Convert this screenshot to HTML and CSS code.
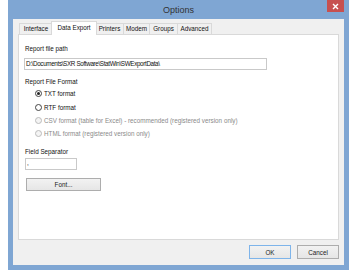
FILE: index.html
```html
<!DOCTYPE html>
<html>
<head>
<meta charset="utf-8">
<title>Options</title>
<link rel="stylesheet" href="styles.css">
</head>
<body>
<div class="window">
  <div class="titlebar">
    <span class="title">Options</span>
    <div class="close"><svg width="7" height="7" viewBox="0 0 7 7"><path d="M1 1L6 6M6 1L1 6" stroke="#fff" stroke-width="1.4"/></svg></div>
  </div>
  <div class="client">
    <div class="tabs">
      <div class="tab t-interface">Interface</div>
      <div class="tab active t-export">Data Export</div>
      <div class="tab t-printers">Printers</div>
      <div class="tab t-modem">Modem</div>
      <div class="tab t-groups">Groups</div>
      <div class="tab t-advanced">Advanced</div>
    </div>
    <div class="panel">
      <div class="label l-path">Report file path</div>
      <div class="textbox path">D:\Documents\SXR Software\StatWin\SWExportData\</div>
      <div class="label l-format">Report File Format</div>
      <div class="radios">
        <div class="radio-row"><span class="radio checked"></span><span>TXT format</span></div>
        <div class="radio-row"><span class="radio"></span><span>RTF format</span></div>
        <div class="radio-row disabled"><span class="radio"></span><span>CSV format (table for Excel) - recommended (registered version only)</span></div>
        <div class="radio-row disabled"><span class="radio"></span><span>HTML format (registered version only)</span></div>
      </div>
      <div class="label l-sep">Field Separator</div>
      <div class="textbox sep">,</div>
      <div class="btn font-btn">Font...</div>
    </div>
    <div class="footer">
      <div class="btn default">OK</div>
      <div class="btn">Cancel</div>
    </div>
  </div>
</div>
</body>
</html>
```
FILE: styles.css
```css
html, body {
  margin: 0;
  padding: 0;
  background: #ffffff;
}
body {
  font-family: "Liberation Sans", Arial, sans-serif;
  font-size: 6.3px;
  color: #111111;
}
.window {
  margin-left: 8px;
  width: 341px;
  height: 270px;
  box-sizing: border-box;
  padding: 0 5px 5px;
  background: #7fa6d3;
  display: flex;
  flex-direction: column;
}
.titlebar {
  height: 19px;
  position: relative;
  display: flex;
  align-items: center;
  justify-content: center;
}
.title {
  font-size: 9px;
  color: #333333;
  margin-top: 1px;
}
.close {
  position: absolute;
  right: 0;
  top: 0;
  width: 17px;
  height: 12px;
  background: #c75050;
  display: flex;
  align-items: center;
  justify-content: center;
}
.client {
  flex: 1;
  background: #f0f0f0;
  padding: 2px 5px 0;
  display: flex;
  flex-direction: column;
}
.tabs {
  display: flex;
  align-items: flex-end;
  height: 13px;
  padding-left: 1px;
  position: relative;
  z-index: 1;
}
.tab {
  height: 11px;
  box-sizing: border-box;
  border: 1px solid #d9d9d9;
  border-bottom: none;
  background: #f0f0f0;
  line-height: 10px;
  margin-right: -1px;
  text-align: center;
  color: #111;
  white-space: nowrap;
}
.t-interface { width: 34px; }
.t-printers { width: 29px; }
.t-modem { width: 27px; }
.t-groups { width: 29px; }
.t-advanced { width: 35px; }
.tab.active {
  width: 46px;
  height: 14px;
  margin-bottom: -1px;
  background: #ffffff;
  line-height: 11px;
  margin-left: -1px;
  margin-right: -2px;
  position: relative;
  z-index: 2;
}
.panel {
  height: 206px;
  box-sizing: border-box;
  background: #ffffff;
  border: 1px solid #d9d9d9;
  padding: 10px 6px 0;
  display: flex;
  flex-direction: column;
  align-items: flex-start;
}
.label {
  line-height: 8px;
  height: 8px;
}
.l-format { margin-top: 8px; }
.l-sep { margin-top: 7px; }
.textbox {
  box-sizing: border-box;
  height: 12px;
  border: 1px solid #c9c9c9;
  background: #fff;
  line-height: 10px;
  padding-left: 1px;
  white-space: nowrap;
}
.textbox.path {
  width: 243px;
  margin-top: 5px;
  margin-left: -1px;
  letter-spacing: -0.35px;
}
.textbox.sep {
  width: 52px;
  margin-top: 2px;
  line-height: 8px;
}
.radios {
  margin-top: 1px;
  display: flex;
  flex-direction: column;
}
.radio-row {
  height: 13.4px;
  display: flex;
  align-items: center;
  padding-left: 10px;
  gap: 2px;
  white-space: nowrap;
}
.radio {
  width: 7px;
  height: 7px;
  box-sizing: border-box;
  border: 1px solid #444;
  border-radius: 50%;
  background: #fff;
  display: flex;
  align-items: center;
  justify-content: center;
}
.radio.checked::after {
  content: "";
  width: 3px;
  height: 3px;
  border-radius: 50%;
  background: #222;
}
.radio-row.disabled {
  color: #8a8a8a;
}
.radio-row.disabled .radio {
  border-color: #bcbcbc;
  background: #f4f4f4;
}
.btn {
  box-sizing: border-box;
  width: 42px;
  height: 14px;
  border: 1px solid #adadad;
  background: linear-gradient(#f2f2f2, #e6e6e6);
  display: flex;
  align-items: center;
  justify-content: center;
  color: #222;
}
.btn.default {
  border-color: #7eb4ea;
}
.font-btn {
  width: 75px;
  height: 13px;
  margin-top: 8px;
  margin-left: 1px;
}
.footer {
  display: flex;
  justify-content: flex-end;
  gap: 6px;
  padding-top: 5px;
}
```
